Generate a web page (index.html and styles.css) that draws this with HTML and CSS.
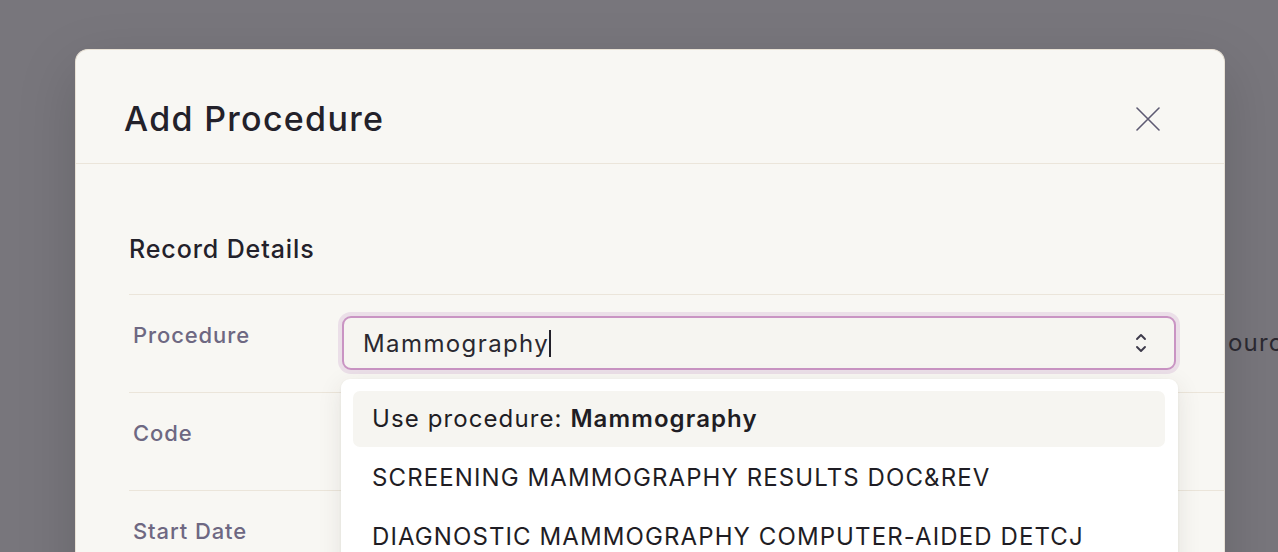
FILE: index.html
```html
<!DOCTYPE html>
<html lang="en">

<head>
    <meta charset="UTF-8">
    <meta name="viewport" content="width=device-width, initial-scale=1.0">
    <title>Add Procedure</title>
    <link rel="stylesheet" href="styles.css">
</head>

<body>
    <div class="overlay">
        <div class="modal">
            <div class="modal-header">
                <h1>Add Procedure</h1>
                <button class="close-btn" aria-label="Close">
                    <svg width="24" height="24" viewBox="0 0 24 24">
                        <path d="M1 1 L23 23 M23 1 L1 23" stroke="#5e5a72" stroke-width="1.6" fill="none" stroke-linecap="round" />
                    </svg>
                </button>
            </div>

            <div class="modal-body">
                <h2 class="section-title">Record Details</h2>

                <div class="field-row">
                    <label class="field-label">Procedure</label>
                    <div class="field-control">
                        <div class="combo focused">
                            <span class="combo-value">Mammography</span><span class="caret"></span>
                            <svg class="combo-icon" width="12" height="20" viewBox="0 0 12 20">
                                <path d="M2 6 L6 2 L10 6 M2 14 L6 18 L10 14" stroke="#3d3a4a" stroke-width="1.9" fill="none" stroke-linecap="round" stroke-linejoin="round" />
                            </svg>
                        </div>
                        <ul class="dropdown">
                            <li class="option active">Use procedure: <strong>Mammography</strong></li>
                            <li class="option">SCREENING MAMMOGRAPHY RESULTS DOC&amp;REV</li>
                            <li class="option">DIAGNOSTIC MAMMOGRAPHY COMPUTER-AIDED DETCJ</li>
                        </ul>
                    </div>
                    <span class="side-label">ource</span>
                </div>

                <div class="field-row">
                    <label class="field-label">Code</label>
                    <div class="field-control">
                        <div class="combo"></div>
                    </div>
                </div>

                <div class="field-row">
                    <label class="field-label">Start Date</label>
                    <div class="field-control">
                        <div class="combo"></div>
                    </div>
                </div>
            </div>
        </div>
    </div>
</body>

</html>
```

FILE: styles.css
```css
/* General Styles */
html,
body {
    margin: 0;
    padding: 0;
    height: 552px;
    overflow: hidden;
}

body {
    font-family: 'Inter', 'Liberation Sans', sans-serif;
    background-color: #78767c;
    color: #23212a;
}

.overlay {
    padding: 49px 53px 0 75px;
}

.modal {
    background-color: #f8f7f3;
    border: 1px solid #e9e2d6;
    border-bottom: none;
    border-radius: 13px 13px 0 0;
    height: 600px;
    box-shadow: 0 20px 60px rgba(0, 0, 0, 0.15);
}

.modal-header {
    display: flex;
    justify-content: space-between;
    align-items: center;
    padding: 51px 64px 26px 48px;
    border-bottom: 1px solid #ebe5da;
}

.modal-header h1 {
    margin: 0;
    font-size: 34px;
    line-height: 36px;
    font-weight: 500;
    letter-spacing: 1.3px;
    color: #23212a;
}

.close-btn {
    background: none;
    border: none;
    padding: 0;
    width: 24px;
    height: 24px;
    cursor: pointer;
}

.close-btn svg {
    display: block;
}

.modal-body {
    padding: 70px 0 0 53px;
}

.section-title {
    margin: 0 0 30px;
    font-size: 25px;
    line-height: 30px;
    font-weight: 500;
    letter-spacing: 0.9px;
    color: #23212a;
}

.field-row {
    display: flex;
    align-items: flex-start;
    padding: 21px 0 22px 4px;
    border-top: 1px solid #ebe5da;
}

.field-label {
    flex: none;
    width: 209px;
    padding-top: 5px;
    font-size: 22px;
    line-height: 28px;
    font-weight: 500;
    letter-spacing: 0.9px;
    color: #6e6882;
}

.field-control {
    flex: none;
    width: 834px;
    position: relative;
}

.combo {
    box-sizing: border-box;
    height: 54px;
    display: flex;
    align-items: center;
    padding: 0 20px 0 19px;
    border: 2px solid #e4e0d8;
    border-radius: 9px;
    background-color: #f6f5f1;
    font-size: 24px;
    color: #2a2830;
}

.combo.focused {
    border-color: #c994c3;
    box-shadow: 0 0 0 4px #ebdfe8;
}

.combo-value {
    letter-spacing: 1.4px;
}

.caret {
    display: inline-block;
    width: 2px;
    height: 27px;
    background-color: #23212a;
}

.combo-icon {
    margin-left: auto;
    margin-right: 7px;
}

.side-label {
    flex: none;
    margin-left: 52px;
    padding-top: 13px;
    font-size: 24px;
    line-height: 28px;
    letter-spacing: 1.2px;
    color: #2a2830;
    white-space: nowrap;
}

.dropdown {
    position: absolute;
    top: 63px;
    left: -1px;
    width: 837px;
    box-sizing: border-box;
    margin: 0;
    padding: 12px 13px 12px 12px;
    list-style: none;
    background-color: #ffffff;
    border-radius: 9px;
    box-shadow: 0 6px 24px rgba(60, 50, 40, 0.10), 0 1px 3px rgba(60, 50, 40, 0.06);
    z-index: 10;
}

.option {
    height: 57px;
    line-height: 57px;
    padding: 0 20px 0 19px;
    font-size: 24px;
    letter-spacing: 1.1px;
    color: #1f1d24;
    border-radius: 7px;
    white-space: nowrap;
}

.option + .option {
    margin-top: 2px;
}

.option.active {
    height: 56px;
    line-height: 56px;
    background-color: #f6f5f1;
}

.option strong {
    font-weight: 600;
}
```
